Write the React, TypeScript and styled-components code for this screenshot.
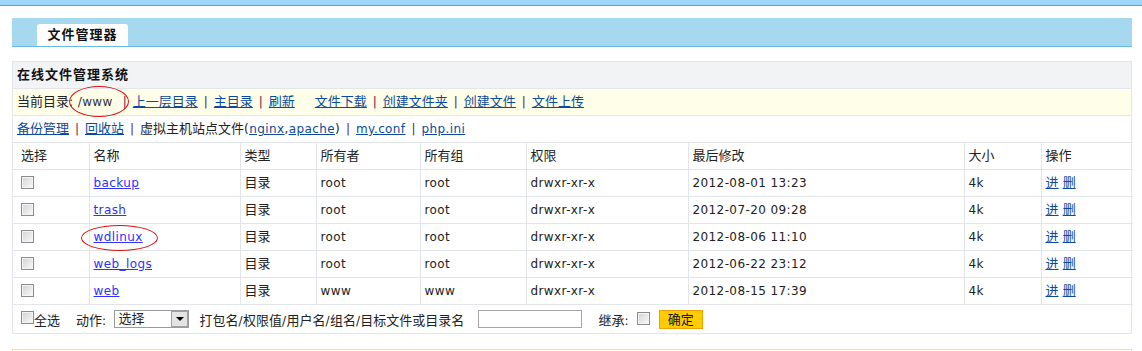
import styled, { createGlobalStyle } from "styled-components";

const GlobalStyle = createGlobalStyle`
  body {
    margin: 0;
    background: #fff;
    font-family: "DejaVu Sans", "Noto Sans CJK SC", sans-serif;
    font-size: 13px;
    color: #222;
  }
`;

const TopBar = styled.div`
  height: 5px;
  background: #9fd6fb;
  border-bottom: 1px solid #4aa9d9;
`;

const Main = styled.div`
  padding: 12px 10px 0 12px;
`;

const TabBar = styled.div`
  height: 28px;
  background: #a6d9ef;
  border-bottom: 1px solid #68b9e2;
  display: flex;
  align-items: flex-end;
  padding-left: 25px;
`;

const Tab = styled.div`
  height: 22px;
  width: 91px;
  background: #fff;
  border-radius: 3px 3px 0 0;
  font-weight: bold;
  letter-spacing: 1px;
  line-height: 22px;
  text-align: center;
  color: #111;
`;

const Panel = styled.div`
  margin-top: 14px;
  border: 1px solid #e2e5ea;
`;

const PanelTitle = styled.div`
  height: 26px;
  line-height: 26px;
  background: #f2f3f5;
  border-bottom: 1px solid #e2e5ea;
  padding-left: 4px;
  font-weight: bold;
  letter-spacing: 1px;
  color: #111;
`;

const Bar = styled.div<{ $bg?: string }>`
  height: 26px;
  line-height: 26px;
  background: ${(p) => p.$bg || "#fff"};
  border-bottom: 1px solid #e2e5ea;
  padding-left: 4px;
  white-space: nowrap;
`;

// latin text is set a size smaller than the chinese, as in the original page
const Lat = styled.span`
  font-size: 12px;
  letter-spacing: 0.4px;
`;

const NavLink = styled.a`
  color: #0b4a9c;
  text-decoration: underline;
  cursor: pointer;
`;

const NameLink = styled.a`
  color: #3030ff;
  text-decoration: underline;
  cursor: pointer;
  font-size: 12px;
  letter-spacing: 0.4px;
`;

const Sep = styled.span`
  display: inline-block;
  width: 16px;
  text-align: center;
  font-size: 12px;
  color: #5a2050;
`;

const Gap = styled.span`
  display: inline-block;
  width: 20px;
`;

const Circled = styled.span<{ $l: number; $r: number; $t: number; $b: number }>`
  position: relative;
  &::after {
    content: "";
    position: absolute;
    left: ${(p) => -p.$l}px;
    right: ${(p) => -p.$r}px;
    top: ${(p) => -p.$t}px;
    bottom: ${(p) => -p.$b}px;
    border: 1px solid #e01010;
    border-radius: 50%;
    pointer-events: none;
  }
`;

const Path = styled(Lat)`
  color: #333;
  margin-right: 4px;
`;

const Grid = styled.table`
  width: 100%;
  border-collapse: collapse;
  table-layout: fixed;
`;

const Col = styled.col<{ $w: number }>`
  width: ${(p) => p.$w}px;
`;

const Cell = styled.td<{ $latin?: boolean }>`
  height: 26px;
  line-height: 26px;
  padding: 0 0 0 4px;
  border-bottom: 1px solid #e2e5ea;
  border-left: 1px solid #e2e5ea;
  white-space: nowrap;
  text-align: left;
  font-weight: normal;
  font-size: ${(p) => (p.$latin ? "12px" : "13px")};
  letter-spacing: ${(p) => (p.$latin ? "0.4px" : "0")};
  &:first-child {
    border-left: none;
    padding-left: 8px;
  }
`;

const HeadCell = styled(Cell).attrs({ as: "th" })``;

const Box = styled.span`
  display: inline-block;
  box-sizing: border-box;
  width: 13px;
  height: 13px;
  border: 1px solid #8c8c8c;
  box-shadow: inset 0 0 0 1px #f4f4f4;
  background: linear-gradient(135deg, #d2d2d2, #fafafa);
  vertical-align: middle;
  margin-top: -3px;
`;

const FootCell = styled.td`
  padding: 0 0 0 8px;
  height: 28px;
`;

const FootRow = styled.div`
  display: flex;
  align-items: center;
  height: 28px;
  white-space: nowrap;
`;

const Spaced = styled.span<{ $ml?: number }>`
  margin-left: ${(p) => p.$ml || 0}px;
`;

const FakeSelect = styled.div`
  box-sizing: border-box;
  width: 75px;
  height: 18px;
  margin-left: 8px;
  border: 1px solid #9b9b9b;
  display: flex;
  align-items: stretch;
  padding-left: 3px;
  line-height: 16px;
  background: #fff;
`;

const SelectText = styled.span`
  flex: 1;
`;

const Arrow = styled.span`
  width: 15px;
  border: 1px solid #a0a0a0;
  background: #e4e4e4;
  display: flex;
  align-items: center;
  justify-content: center;
  &::before {
    content: "";
    border-left: 4px solid transparent;
    border-right: 4px solid transparent;
    border-top: 4px solid #000;
  }
`;

const TextInput = styled.div`
  box-sizing: border-box;
  width: 104px;
  height: 18px;
  margin-left: 14px;
  border: 1px solid #a6a6a6;
  background: #fff;
`;

const Confirm = styled.div`
  box-sizing: border-box;
  width: 44px;
  height: 19px;
  margin-left: 9px;
  background: #ffcc00;
  border: 1px solid #f0a000;
  text-align: center;
  line-height: 17px;
  color: #111;
`;

const NextPanel = styled.div`
  margin-top: 15px;
  height: 20px;
  border: 1px solid #fbe39b;
  background: #fffcec;
`;

const files = [
  { name: "backup", owner: "root", group: "root", time: "2012-08-01 13:23" },
  { name: "trash", owner: "root", group: "root", time: "2012-07-20 09:28" },
  { name: "wdlinux", owner: "root", group: "root", time: "2012-08-06 11:10", mark: true },
  { name: "web_logs", owner: "root", group: "root", time: "2012-06-22 23:12" },
  { name: "web", owner: "www", group: "www", time: "2012-08-15 17:39" },
];

const widths = [76, 151, 76, 104, 106, 162, 276, 77, 92];
const heads = ["选择", "名称", "类型", "所有者", "所有组", "权限", "最后修改", "大小", "操作"];

export default function App() {
  return (
    <>
      <GlobalStyle />
      <TopBar />
      <Main>
        <TabBar>
          <Tab>文件管理器</Tab>
        </TabBar>
        <Panel>
          <PanelTitle>在线文件管理系统</PanelTitle>
          <Bar $bg="#fffee8">
            当前目录<Lat>: </Lat>
            <Circled $l={9} $r={12} $t={8} $b={8}>
              <Path>/www</Path>
            </Circled>
            <Sep>|</Sep>
            <NavLink>上一层目录</NavLink>
            <Sep>|</Sep>
            <NavLink>主目录</NavLink>
            <Sep>|</Sep>
            <NavLink>刷新</NavLink>
            <Gap />
            <NavLink>文件下载</NavLink>
            <Sep>|</Sep>
            <NavLink>创建文件夹</NavLink>
            <Sep>|</Sep>
            <NavLink>创建文件</NavLink>
            <Sep>|</Sep>
            <NavLink>文件上传</NavLink>
          </Bar>
          <Bar>
            <NavLink>备份管理</NavLink>
            <Sep>|</Sep>
            <NavLink>回收站</NavLink>
            <Sep>|</Sep>
            虚拟主机站点文件<Lat>(</Lat>
            <NavLink>
              <Lat>nginx</Lat>
            </NavLink>
            <Lat>,</Lat>
            <NavLink>
              <Lat>apache</Lat>
            </NavLink>
            <Lat>)</Lat>
            <Sep>|</Sep>
            <NavLink>
              <Lat>my.conf</Lat>
            </NavLink>
            <Sep>|</Sep>
            <NavLink>
              <Lat>php.ini</Lat>
            </NavLink>
          </Bar>
          <Grid>
            <colgroup>
              {widths.map((w, i) => (
                <Col key={i} $w={w} />
              ))}
            </colgroup>
            <thead>
              <tr>
                {heads.map((h) => (
                  <HeadCell key={h}>{h}</HeadCell>
                ))}
              </tr>
            </thead>
            <tbody>
              {files.map((f) => (
                <tr key={f.name}>
                  <Cell>
                    <Box />
                  </Cell>
                  <Cell>
                    {f.mark ? (
                      <Circled $l={13} $r={15} $t={4} $b={7}>
                        <NameLink>{f.name}</NameLink>
                      </Circled>
                    ) : (
                      <NameLink>{f.name}</NameLink>
                    )}
                  </Cell>
                  <Cell>目录</Cell>
                  <Cell $latin>{f.owner}</Cell>
                  <Cell $latin>{f.group}</Cell>
                  <Cell $latin>drwxr-xr-x</Cell>
                  <Cell $latin>{f.time}</Cell>
                  <Cell $latin>4k</Cell>
                  <Cell>
                    <NavLink>进</NavLink> <NavLink>删</NavLink>
                  </Cell>
                </tr>
              ))}
              <tr>
                <FootCell colSpan={9}>
                  <FootRow>
                    <Box style={{ marginTop: -4 }} />
                    <span>全选</span>
                    <Spaced $ml={16}>
                      动作<Lat>:</Lat>
                    </Spaced>
                    <FakeSelect>
                      <SelectText>选择</SelectText>
                      <Arrow />
                    </FakeSelect>
                    <Spaced $ml={10}>
                      打包名<Lat>/</Lat>权限值<Lat>/</Lat>用户名<Lat>/</Lat>组名<Lat>/</Lat>目标文件或目录名
                    </Spaced>
                    <TextInput />
                    <Spaced $ml={16}>
                      继承<Lat>:</Lat>
                    </Spaced>
                    <Spaced $ml={8}>
                      <Box />
                    </Spaced>
                    <Confirm>确定</Confirm>
                  </FootRow>
                </FootCell>
              </tr>
            </tbody>
          </Grid>
        </Panel>
        <NextPanel />
      </Main>
    </>
  );
}
